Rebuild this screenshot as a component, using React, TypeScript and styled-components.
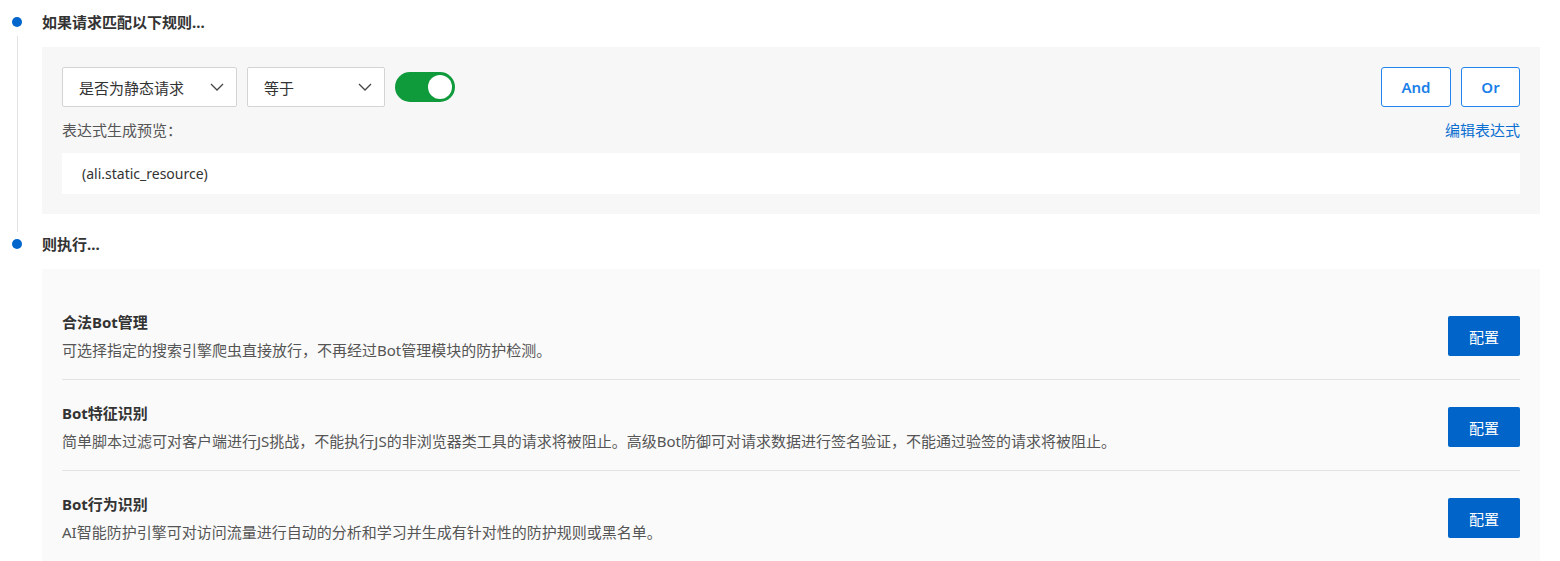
import styled, { createGlobalStyle } from "styled-components";

const GlobalStyle = createGlobalStyle`
  html, body {
    margin: 0;
    padding: 0;
    background: #fff;
  }
  body {
    font-family: "Noto Sans", "Noto Sans CJK SC", sans-serif;
    font-size: 15px;
    color: #333;
  }
`;

const Page = styled.div`
  padding: 12px 20px 0 0;
`;

const Step = styled.div`
  display: grid;
  grid-template-columns: 42px 1fr;
`;

const Rail = styled.div`
  width: 34px;
  display: flex;
  flex-direction: column;
  align-items: center;
`;

const Dot = styled.div`
  width: 10px;
  height: 10px;
  border-radius: 50%;
  background: #0066cc;
  margin-top: 5px;
`;

const Line = styled.div<{ $show: boolean }>`
  flex: 1;
  width: 1px;
  margin-top: 9px;
  margin-bottom: 2px;
  background: ${(p) => (p.$show ? "#e2e2e2" : "transparent")};
`;

const Body = styled.div<{ $last?: boolean }>`
  padding-bottom: ${(p) => (p.$last ? "0" : "20px")};
`;

const StepTitle = styled.div`
  font-weight: 700;
  line-height: 20px;
  color: #333;
  margin-bottom: 15px;
`;

const Panel = styled.div<{ $tone: string }>`
  background: ${(p) => p.$tone};
  padding: 20px;
`;

const Toolbar = styled.div`
  display: flex;
  align-items: center;
  gap: 10px;
`;

const Select = styled.div<{ $w: number }>`
  width: ${(p) => p.$w}px;
  height: 40px;
  box-sizing: border-box;
  background: #fff;
  border: 1px solid #d4d4d4;
  border-radius: 2px;
  padding: 0 12px 0 16px;
  display: flex;
  align-items: center;
  justify-content: space-between;
  color: #333;
`;

const Toggle = styled.div`
  width: 60px;
  height: 30px;
  border-radius: 15px;
  background: #0f9a3b;
  position: relative;
`;

const Knob = styled.div`
  position: absolute;
  right: 3px;
  top: 3px;
  width: 24px;
  height: 24px;
  border-radius: 50%;
  background: #fff;
`;

const Spacer = styled.div`
  flex: 1;
`;

const OutlineButton = styled.button<{ $w: number }>`
  width: ${(p) => p.$w}px;
  height: 40px;
  border: 1px solid #2183ee;
  border-radius: 3px;
  background: #fff;
  color: #1a7fe8;
  font-family: inherit;
  font-size: 15px;
  font-weight: 600;
  cursor: pointer;
`;

const LabelRow = styled.div`
  display: flex;
  justify-content: space-between;
  align-items: center;
  line-height: 20px;
  margin-top: 13px;
`;

const Label = styled.span`
  color: #555;
`;

const LinkText = styled.a`
  color: #0a6fd1;
  text-decoration: none;
  cursor: pointer;
`;

const Preview = styled.div`
  margin-top: 13px;
  height: 41px;
  background: #fff;
  padding: 0 20px;
  display: flex;
  align-items: center;
  font-size: 14px;
  color: #333;
`;

const ActionRow = styled.div`
  display: flex;
  align-items: center;
  justify-content: space-between;
  padding: 22px 0 18px;
  border-bottom: 1px solid #e3e3e3;
  &:last-child {
    border-bottom: none;
  }
`;

const ActionText = styled.div`
  display: flex;
  flex-direction: column;
  gap: 6px;
`;

const ActionTitle = styled.div`
  font-weight: 700;
  line-height: 22px;
  color: #333;
`;

const ActionDesc = styled.div`
  line-height: 22px;
  color: #555;
`;

const PrimaryButton = styled.button`
  width: 72px;
  height: 40px;
  border: none;
  border-radius: 2px;
  background: #0064c8;
  color: #fff;
  font-family: inherit;
  font-size: 15px;
  cursor: pointer;
  flex-shrink: 0;
`;

const Chevron = () => (
  <svg width="14" height="8" viewBox="0 0 14 8" fill="none">
    <path d="M1 1l6 6 6-6" stroke="#444" strokeWidth="1.3" />
  </svg>
);

const actions = [
  {
    title: "合法Bot管理",
    desc: "可选择指定的搜索引擎爬虫直接放行，不再经过Bot管理模块的防护检测。",
  },
  {
    title: "Bot特征识别",
    desc: "简单脚本过滤可对客户端进行JS挑战，不能执行JS的非浏览器类工具的请求将被阻止。高级Bot防御可对请求数据进行签名验证，不能通过验签的请求将被阻止。",
  },
  {
    title: "Bot行为识别",
    desc: "AI智能防护引擎可对访问流量进行自动的分析和学习并生成有针对性的防护规则或黑名单。",
  },
];

export default function App() {
  return (
    <Page>
      <GlobalStyle />
      <Step>
        <Rail>
          <Dot />
          <Line $show />
        </Rail>
        <Body>
          <StepTitle>如果请求匹配以下规则...</StepTitle>
          <Panel $tone="#f7f7f7">
            <Toolbar>
              <Select $w={175}>
                <span>是否为静态请求</span>
                <Chevron />
              </Select>
              <Select $w={138}>
                <span>等于</span>
                <Chevron />
              </Select>
              <Toggle>
                <Knob />
              </Toggle>
              <Spacer />
              <OutlineButton $w={70}>And</OutlineButton>
              <OutlineButton $w={59}>Or</OutlineButton>
            </Toolbar>
            <LabelRow>
              <Label>表达式生成预览：</Label>
              <LinkText>编辑表达式</LinkText>
            </LabelRow>
            <Preview>(ali.static_resource)</Preview>
          </Panel>
        </Body>
      </Step>
      <Step>
        <Rail>
          <Dot />
          <Line $show={false} />
        </Rail>
        <Body $last>
          <StepTitle>则执行...</StepTitle>
          <Panel $tone="#fafafa">
            {actions.map((a) => (
              <ActionRow key={a.title}>
                <ActionText>
                  <ActionTitle>{a.title}</ActionTitle>
                  <ActionDesc>{a.desc}</ActionDesc>
                </ActionText>
                <PrimaryButton>配置</PrimaryButton>
              </ActionRow>
            ))}
          </Panel>
        </Body>
      </Step>
    </Page>
  );
}
